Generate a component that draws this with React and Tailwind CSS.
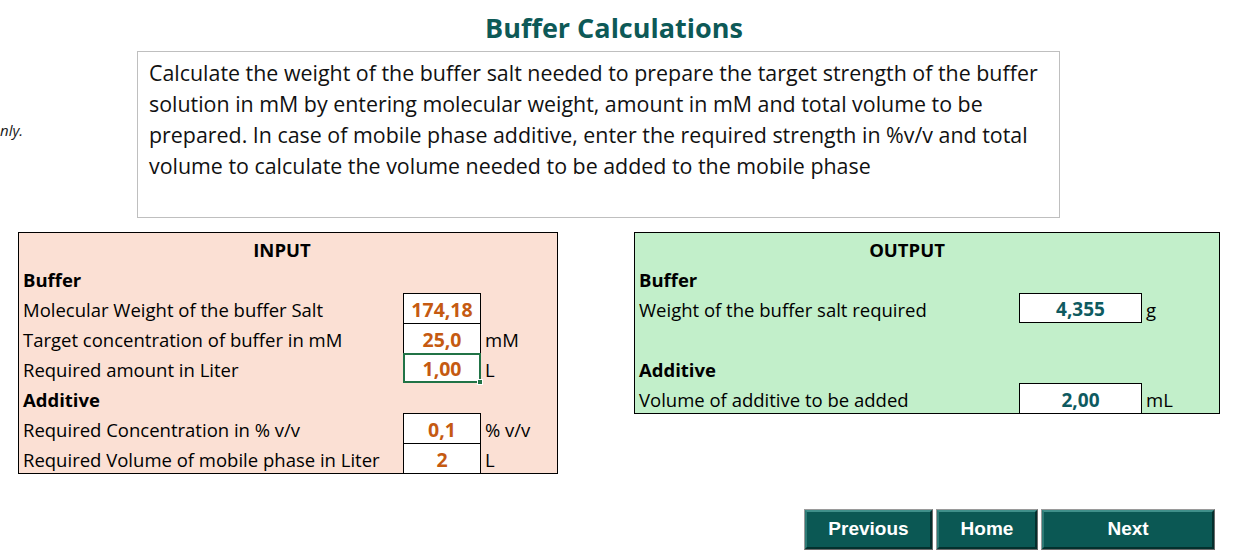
import React from "react";

const F = { fontFamily: "'Open Sans', 'Liberation Sans', sans-serif" };

function InRow({ label, value, unit, bold, cell, sel, top, bottom }) {
  return (
    <div className="grid grid-cols-[384px_78px_1fr] h-[30px]">
      <div className={`pl-[4px] flex items-end pb-[2px] text-[18.5px] leading-[22px] ${bold ? "font-bold" : ""}`}>{label}</div>
      {cell ? (
        <div className={`relative flex items-end justify-center pb-[2px] bg-white border-x border-black ${top ? "border-t" : ""} ${bottom ? "border-b" : ""} text-[19.5px] leading-[22px] font-bold text-[#c55a11]`}>
          {value}
          {sel && (
            <div className="absolute -inset-[1px] border-2 border-[#217346]">
              <div className="absolute -right-[4px] -bottom-[4px] w-[6px] h-[6px] bg-[#217346] border border-white" />
            </div>
          )}
        </div>
      ) : (
        <div />
      )}
      <div className="pl-[4px] flex items-end pb-[2px] text-[18.5px] leading-[22px]">{unit}</div>
    </div>
  );
}

function OutRow({ label, value, unit, bold, cell, bottom }) {
  return (
    <div className="grid grid-cols-[384px_123px_1fr] h-[30px]">
      <div className={`pl-[4px] flex items-end pb-[2px] text-[18.5px] leading-[22px] ${bold ? "font-bold" : ""}`}>{label}</div>
      {cell ? (
        <div className={`flex items-end justify-center pb-[2px] bg-white border-x border-t border-black ${bottom ? "border-b" : ""} text-[19px] leading-[22px] font-bold text-[#0e5a60]`}>
          {value}
        </div>
      ) : (
        <div />
      )}
      <div className="pl-[4px] flex items-end pb-[2px] text-[18.5px] leading-[22px]">{unit}</div>
    </div>
  );
}

function Btn({ children, w }) {
  return (
    <div className={`${w} h-[41px] border border-t-[#9a9a9a] border-l-[#9a9a9a] border-b-[#6a6a6a] border-r-[#6a6a6a] bg-[#0b5854]`}>
      <div className="h-full border-[2px] border-t-[#3f8f8a] border-l-[#2e7a75] border-b-[#03312e] border-r-[#042f2d] flex items-center justify-center text-white font-bold text-[19px]" style={{ fontFamily: "'Liberation Sans', Arial, sans-serif" }}>
        {children}
      </div>
    </div>
  );
}

export default function App() {
  return (
    <div className="w-[1244px] h-[560px] bg-white text-black overflow-hidden" style={F}>
      <div className="h-[51px] flex justify-center items-start pt-[10px] pr-[16px]">
        <div className="text-[27px] leading-[36px] font-bold text-[#0d5957]">Buffer Calculations</div>
      </div>
      <div className="flex">
        <div className="w-[137px] h-[167px] flex items-center justify-start">
          <div className="italic text-[15px] text-[#1a1a1a] pb-[8px]">nly.</div>
        </div>
        <div className="w-[923px] h-[167px] border border-[#bfbfbf] pl-[11px] pt-[5px] text-[21.4px] leading-[31px] text-[#111]">
          Calculate the weight of the buffer salt needed to prepare the target strength of the buffer solution in mM by entering molecular weight, amount in mM and total volume to be prepared. In case of mobile phase additive, enter the required strength in %v/v and total volume to calculate the volume needed to be added to the mobile phase
        </div>
      </div>
      <div className="flex items-start mt-[14px] pl-[18px]">
        <div className="w-[540px] border border-black bg-[#fbe0d4]">
          <div className="h-[30px] flex items-end justify-center pb-[2px] pr-[12px] text-[18.5px] leading-[22px] font-bold">INPUT</div>
          <InRow label="Buffer" bold />
          <InRow label="Molecular Weight of the buffer Salt" value="174,18" cell top />
          <InRow label="Target concentration of buffer in mM" value="25,0" unit="mM" cell top />
          <InRow label="Required amount in Liter" value="1,00" unit="L" cell top bottom sel />
          <InRow label="Additive" bold />
          <InRow label="Required Concentration in % v/v" value="0,1" unit="% v/v" cell top />
          <InRow label="Required Volume of mobile phase in Liter" value="2" unit="L" cell top />
        </div>
        <div className="ml-[76px] w-[586px] border border-black bg-[#c2efca]">
          <div className="h-[30px] flex items-end justify-center pb-[2px] pr-[40px] text-[18.5px] leading-[22px] font-bold">OUTPUT</div>
          <OutRow label="Buffer" bold />
          <OutRow label="Weight of the buffer salt required" value="4,355" unit="g" cell bottom />
          <OutRow label="" />
          <OutRow label="Additive" bold />
          <OutRow label="Volume of additive to be added" value="2,00" unit="mL" cell />
        </div>
      </div>
      <div className="flex mt-[35px] pl-[804px] gap-[3px]">
        <Btn w="w-[129px]">Previous</Btn>
        <Btn w="w-[102px]">Home</Btn>
        <Btn w="w-[174px]">Next</Btn>
      </div>
    </div>
  );
}
